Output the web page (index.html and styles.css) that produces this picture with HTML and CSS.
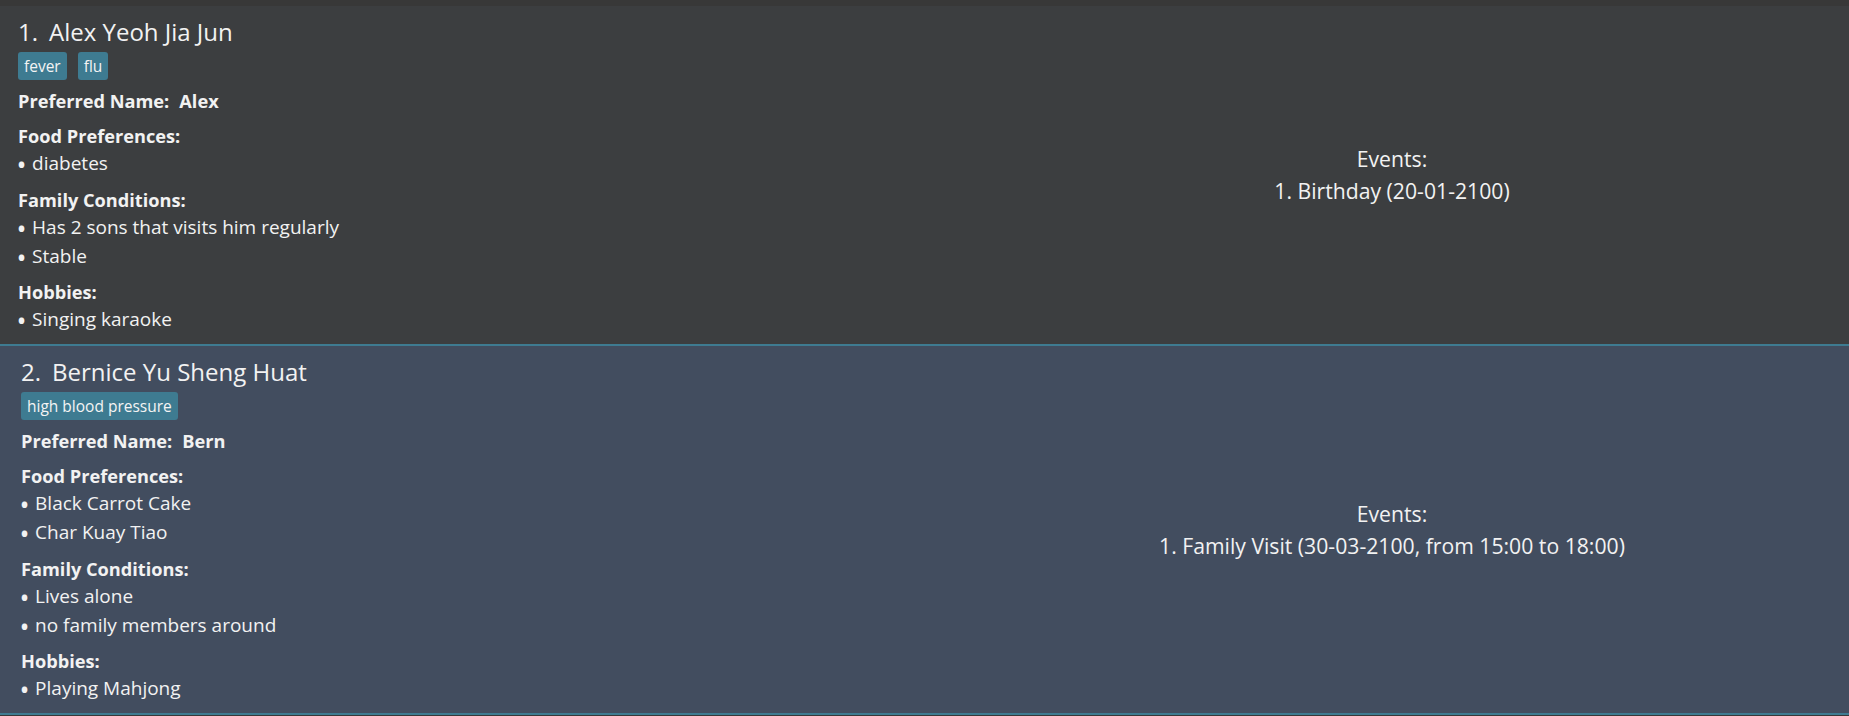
FILE: index.html
```html
<!DOCTYPE html>
<html lang="en">
<head>
<meta charset="utf-8">
<title>Persons</title>
<link rel="stylesheet" href="styles.css">
</head>
<body>
<div class="list">
  <div class="card card-plain">
    <div class="info">
      <div class="title"><span class="idx">1.</span><span class="name">Alex Yeoh Jia Jun</span></div>
      <div class="tags"><span class="tag">fever</span><span class="tag">flu</span></div>
      <div class="pref"><span class="bold">Preferred Name:</span><span class="bold pref-val">Alex</span></div>
      <div class="section">
        <div class="label">Food Preferences:</div>
        <div class="item"><span class="bullet">•</span> diabetes</div>
      </div>
      <div class="section">
        <div class="label">Family Conditions:</div>
        <div class="item"><span class="bullet">•</span> Has 2 sons that visits him regularly</div>
        <div class="item"><span class="bullet">•</span> Stable</div>
      </div>
      <div class="section last">
        <div class="label">Hobbies:</div>
        <div class="item"><span class="bullet">•</span> Singing karaoke</div>
      </div>
    </div>
    <div class="events">
      <div class="ev">Events:</div>
      <div class="ev">1. Birthday (20-01-2100)</div>
    </div>
  </div>
  <div class="card card-selected">
    <div class="info">
      <div class="title"><span class="idx">2.</span><span class="name">Bernice Yu Sheng Huat</span></div>
      <div class="tags"><span class="tag">high blood pressure</span></div>
      <div class="pref"><span class="bold">Preferred Name:</span><span class="bold pref-val">Bern</span></div>
      <div class="section">
        <div class="label">Food Preferences:</div>
        <div class="item"><span class="bullet">•</span> Black Carrot Cake</div>
        <div class="item"><span class="bullet">•</span> Char Kuay Tiao</div>
      </div>
      <div class="section">
        <div class="label">Family Conditions:</div>
        <div class="item"><span class="bullet">•</span> Lives alone</div>
        <div class="item"><span class="bullet">•</span> no family members around</div>
      </div>
      <div class="section last">
        <div class="label">Hobbies:</div>
        <div class="item"><span class="bullet">•</span> Playing Mahjong</div>
      </div>
    </div>
    <div class="events">
      <div class="ev">Events:</div>
      <div class="ev">1. Family Visit (30-03-2100, from 15:00 to 18:00)</div>
    </div>
  </div>
</div>
</body>
</html>
```

FILE: styles.css
```css
html, body {
  margin: 0;
  padding: 0;
  background: #383838;
  font-family: "Open Sans", "Noto Sans", sans-serif;
  color: #f2f2f2;
}

.list {
  padding-top: 6px;
  display: flex;
  flex-direction: column;
}

.card {
  display: grid;
  align-items: center;
  grid-template-columns: 935px 1fr;
}

.card-plain {
  background: #3c3e40;
  padding: 10px 0 10px 0;
}

.card-selected {
  background: #424d5f;
  border-top: 2px solid #3e7b91;
  border-bottom: 2px solid #3e7b91;
  padding: 10px 0 10px 0;
}

.info {
  display: flex;
  flex-direction: column;
  align-self: start;
  padding-left: 18px;
}

.card-selected .info {
  padding-left: 21px;
}

.title {
  font-size: 24px;
  line-height: 32px;
  white-space: nowrap;
}

.idx {
  display: inline-block;
  min-width: 31px;
}

.tags {
  display: flex;
  gap: 11px;
  margin-top: 4px;
}

.tag {
  background: #3e7b91;
  color: #f4f4f4;
  font-size: 15.5px;
  height: 28px;
  line-height: 28px;
  padding: 0 6px;
  border-radius: 3px;
}

.pref {
  margin-top: 9px;
  font-size: 18.2px;
  line-height: 25px;
}

.bold {
  font-weight: 700;
}

.pref-val {
  margin-left: 10px;
}

.section {
  margin-top: 10px;
  font-size: 19px;
}

.section.last {
  margin-top: 9px;
}

.label {
  font-weight: 700;
  font-size: 18.2px;
  line-height: 25px;
}

.item {
  line-height: 29px;
  white-space: nowrap;
}

.bullet {
  display: inline-block;
  margin-right: 2px;
  transform: translateY(2px) scale(1.4);
  transform-origin: 50% 50%;
}

.events {
  text-align: center;
  font-size: 21.2px;
  line-height: 32px;
}
```
